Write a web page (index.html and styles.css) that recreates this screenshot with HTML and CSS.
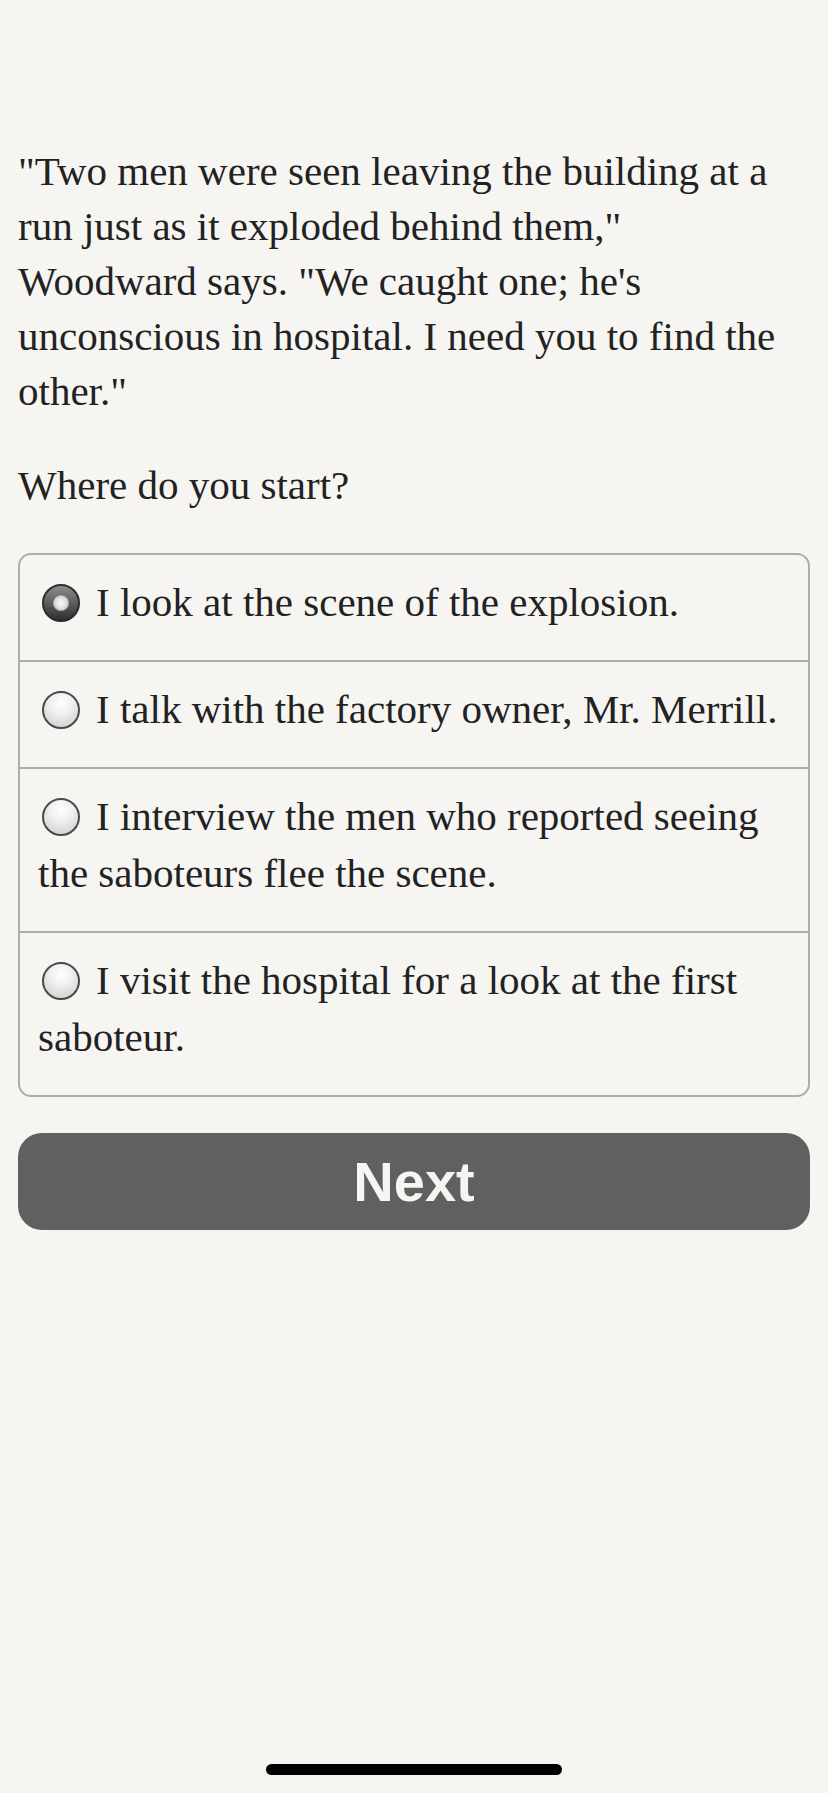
FILE: index.html
```html
<!DOCTYPE html>
<html lang="en">
   <head>
      <meta charset="UTF-8" />
      <meta name="viewport" content="width=device-width, initial-scale=1.0" />
      <title>Choice</title>
      <link rel="stylesheet" href="styles.css">
   </head>
   <body>
      <div class="page">
         <div class="story">
            <p>"Two men were seen leaving the building at a run just as it exploded behind them," Woodward says. "We caught one; he's unconscious in hospital. I need you to find the other."</p>
            <p>Where do you start?</p>
         </div>

         <form class="choices">
            <label class="choice">
               <input type="radio" name="choice" value="0" checked />I look at the scene of the explosion.
            </label>
            <label class="choice">
               <input type="radio" name="choice" value="1" />I talk with the factory owner, Mr. Merrill.
            </label>
            <label class="choice">
               <input type="radio" name="choice" value="2" />I interview the men who reported seeing the saboteurs flee the scene.
            </label>
            <label class="choice">
               <input type="radio" name="choice" value="3" />I visit the hospital for a look at the first saboteur.
            </label>
         </form>

         <button type="button" class="next">Next</button>

         <div class="home-bar"></div>
      </div>
   </body>
</html>
```

FILE: styles.css
```css
* {
   box-sizing: border-box;
}

body {
   margin: 0;
   background-color: #f7f5f2;
   color: #222;
   font-family: 'Liberation Serif', 'Times New Roman', serif;
}

.page {
   display: flex;
   flex-direction: column;
   min-height: 100vh;
   padding: 144px 18px 0 18px;
}

.story {
   margin-right: 12px;
}

.story p {
   margin: 0 0 39px 0;
   font-size: 41px;
   line-height: 55px;
}

.story p:last-child {
   margin-bottom: 40px;
}

.choices {
   margin: 0;
   border: 2px solid #adadad;
   border-radius: 13px;
}

.choice {
   display: block;
   padding: 19px 18px 29px 18px;
   font-size: 41px;
   line-height: 57px;
}

.choice + .choice {
   border-top: 2px solid #adadad;
}

.choice input {
   appearance: none;
   -webkit-appearance: none;
   display: inline-block;
   width: 38px;
   height: 38px;
   margin: 0 16px 0 4px;
   vertical-align: -6px;
   border: 2px solid #4a4a4a;
   border-radius: 50%;
   background: radial-gradient(circle at 50% 30%, #ffffff 0, #f1f1f1 35%, #c9c9c9 100%);
}

.choice input:checked {
   border-color: #2c2c2c;
   background:
      radial-gradient(circle at 50% 50%, #fafafa 0, #d8d8d8 6.5px, #a0a0a0 7.5px, #8a8a8a 8px, transparent 8.5px),
      linear-gradient(#8c8c8c, #2f2f2f);
}

.next {
   margin-top: 36px;
   height: 97px;
   border: none;
   border-radius: 24px;
   background-color: #616060;
   color: #f7f5f2;
   font-family: 'Liberation Sans', Arial, sans-serif;
   font-size: 56px;
   font-weight: bold;
}

.home-bar {
   align-self: center;
   width: 296px;
   height: 11px;
   margin: auto 0 18px 0;
   border-radius: 6px;
   background-color: #000;
}
```
